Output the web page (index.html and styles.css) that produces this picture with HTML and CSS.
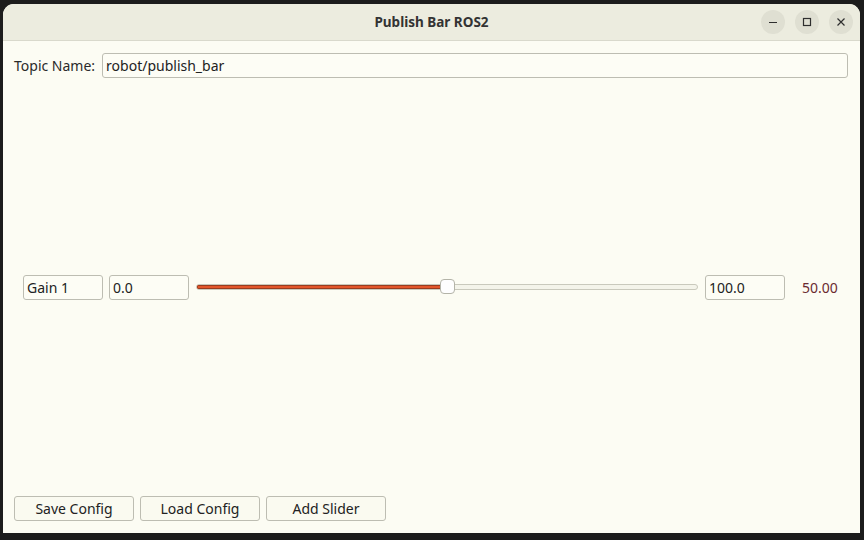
FILE: index.html
```html
<!DOCTYPE html>
<html>
<head>
<meta charset="utf-8">
<link rel="stylesheet" href="styles.css">
</head>
<body>
<div class="window">
  <div class="titlebar">
    <span class="title">Publish Bar ROS2</span>
    <div class="controls">
      <span class="ctl"><svg width="24" height="24" viewBox="0 0 24 24"><path d="M8 12.5h8" stroke="#2e2e2e" stroke-width="1.2" fill="none"/></svg></span>
      <span class="ctl"><svg width="24" height="24" viewBox="0 0 24 24"><rect x="8.5" y="8.5" width="7" height="7" stroke="#2e2e2e" stroke-width="1.2" fill="none"/></svg></span>
      <span class="ctl"><svg width="24" height="24" viewBox="0 0 24 24"><path d="M8.5 8.5l7 7M15.5 8.5l-7 7" stroke="#2e2e2e" stroke-width="1.2" fill="none"/></svg></span>
    </div>
  </div>
  <div class="content">
    <div class="topic-row">
      <span class="label">Topic Name:</span>
      <div class="field topic-field">robot/publish_bar</div>
    </div>
    <div class="middle">
      <div class="slider-row">
        <div class="field box">Gain 1</div>
        <div class="field box">0.0</div>
        <div class="slider">
          <div class="track"><div class="fill" style="width:50%"></div></div>
          <div class="handle" style="left:50%"></div>
        </div>
        <div class="field box">100.0</div>
        <span class="value">50.00</span>
      </div>
    </div>
    <div class="button-row">
      <div class="btn">Save Config</div>
      <div class="btn">Load Config</div>
      <div class="btn">Add Slider</div>
    </div>
  </div>
</div>
</body>
</html>
```
FILE: styles.css
```css
html, body {
  margin: 0;
  padding: 0;
  background: #1c1c1c;
  width: 864px;
  height: 540px;
  overflow: hidden;
}
body {
  padding: 4px 4px 7px 3px;
  box-sizing: border-box;
  font-family: "Noto Sans", "DejaVu Sans", sans-serif;
  font-size: 14px;
  color: #2a2a2a;
}
.window {
  width: 857px;
  height: 529px;
  background: #fcfcf3;
  border-radius: 11px 11px 0 0;
  display: flex;
  flex-direction: column;
  overflow: hidden;
}
.titlebar {
  height: 36px;
  flex: none;
  background: #ececdf;
  border-bottom: 1px solid #d9d9cc;
  display: flex;
  align-items: center;
  justify-content: center;
  position: relative;
}
.title {
  font-weight: bold;
  font-size: 13.5px;
  color: #333;
}
.controls {
  position: absolute;
  right: 7px;
  top: 6px;
  display: flex;
  gap: 10px;
}
.ctl {
  width: 24px;
  height: 24px;
  border-radius: 50%;
  background: #dfdfd2;
  display: block;
}
.ctl svg { display: block; }
.content {
  flex: 1;
  display: flex;
  flex-direction: column;
  padding: 12px 12px 12px 11px;
}
.topic-row {
  display: flex;
  align-items: center;
  gap: 7px;
}
.label { color: #2a2a2a; }
.field {
  height: 25px;
  box-sizing: border-box;
  border: 1px solid #bdbdb2;
  border-radius: 3px;
  background: #fdfdf5;
  display: flex;
  align-items: center;
  padding: 0 3px;
  color: #222;
}
.topic-field { flex: 1; }
.middle {
  flex: 1;
  display: flex;
  align-items: center;
}
.slider-row {
  flex: 1;
  display: flex;
  align-items: center;
  padding: 0 9px;
}
.box { width: 80px; flex: none; }
.slider-row .box:nth-child(2) { margin-left: 6px; }
.slider {
  flex: 1;
  margin: 0 7px;
  height: 16px;
  position: relative;
}
.track {
  position: absolute;
  left: 0; right: 0;
  top: 5px;
  height: 6px;
  box-sizing: border-box;
  border: 1px solid #c9c9bc;
  border-radius: 3px;
  background: #f4f4ea;
  overflow: hidden;
}
.fill {
  height: 100%;
  background: #e2562a;
  box-shadow: inset 0 0 0 1px #9a3c1e;
}
.handle {
  position: absolute;
  top: 0;
  width: 15px;
  height: 15px;
  margin-left: -7px;
  box-sizing: border-box;
  background: #fefefe;
  border: 1px solid #b4b4a8;
  border-radius: 4px;
}
.value {
  width: 37px;
  margin-left: 17px;
  color: #6a2a30;
}
.button-row {
  display: flex;
  gap: 6px;
}
.btn {
  width: 120px;
  height: 25px;
  box-sizing: border-box;
  border: 1px solid #bdbdb2;
  border-radius: 3px;
  background: #fafaf0;
  display: flex;
  align-items: center;
  justify-content: center;
  color: #222;
}
```
